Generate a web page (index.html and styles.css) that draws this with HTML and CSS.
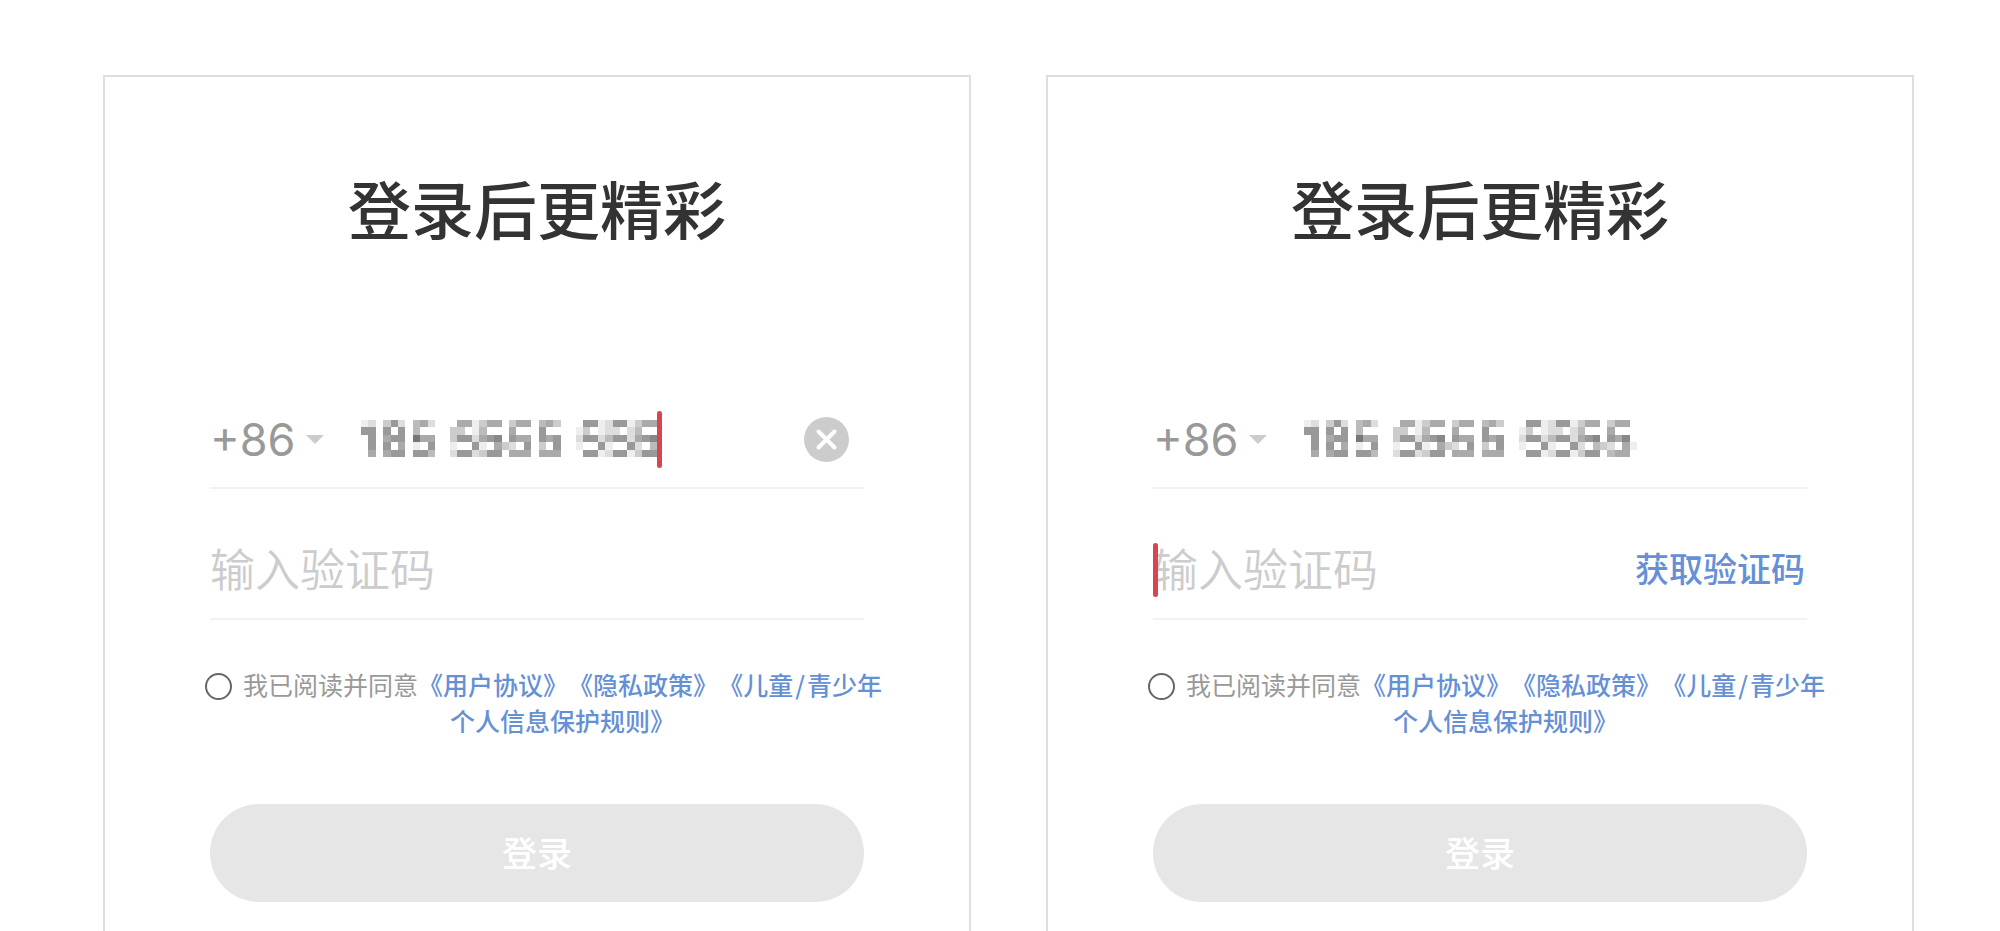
FILE: index.html
```html
<!DOCTYPE html>
<html lang="zh-CN">
<head>
  <meta charset="UTF-8" />
  <meta name="viewport" content="width=device-width, initial-scale=1.0"/>
  <title>登录</title>

  <link rel="stylesheet" href="styles.css">
</head>
<body>
  <main class="screens">

    <!-- Typing the phone number -->
    <section class="login-card">
      <h1>登录后更精彩</h1>
      <form>
        <div class="field field-phone">
          <div class="country">
            <select aria-label="国家/地区代码">
              <option>+86</option>
            </select>
            <svg class="arrow" width="18" height="9" viewBox="0 0 18 9"><path d="M0 0h18L9 9z"/></svg>
          </div>
          <div class="phone">
            <input type="tel" aria-label="手机号" value="185 5555 555">
            <svg class="mask" data-cols="40"></svg>
            <span class="caret caret-end"></span>
          </div>
          <button type="button" class="clear" aria-label="清除">
            <svg width="45" height="45" viewBox="0 0 45 45">
              <circle cx="22.5" cy="22.5" r="22.5"/>
              <path d="M14.5 14.5l16 16M30.5 14.5l-16 16"/>
            </svg>
          </button>
        </div>

        <div class="field field-code">
          <input type="text" aria-label="验证码" placeholder="输入验证码">
        </div>

        <div class="terms">
          <input type="checkbox" id="agree1">
          <p><label for="agree1">我已阅读并同意</label><a href="#">《用户协议》</a><a href="#">《隐私政策》</a><a href="#">《儿童<span class="slash">/</span>青少年个人信息保护规则》</a></p>
        </div>

        <button type="button" class="submit">登录</button>
      </form>
    </section>

    <!-- Number complete, waiting for the code -->
    <section class="login-card">
      <h1>登录后更精彩</h1>
      <form>
        <div class="field field-phone">
          <div class="country">
            <select aria-label="国家/地区代码">
              <option>+86</option>
            </select>
            <svg class="arrow" width="18" height="9" viewBox="0 0 18 9"><path d="M0 0h18L9 9z"/></svg>
          </div>
          <div class="phone">
            <input type="tel" aria-label="手机号" value="185 5555 5555">
            <svg class="mask" data-cols="45"></svg>
          </div>
        </div>

        <div class="field field-code">
          <span class="caret caret-start"></span>
          <input type="text" aria-label="验证码" placeholder="输入验证码">
          <button type="button" class="get-code">获取验证码</button>
        </div>

        <div class="terms">
          <input type="checkbox" id="agree2">
          <p><label for="agree2">我已阅读并同意</label><a href="#">《用户协议》</a><a href="#">《隐私政策》</a><a href="#">《儿童<span class="slash">/</span>青少年个人信息保护规则》</a></p>
        </div>

        <button type="button" class="submit">登录</button>
      </form>
    </section>

  </main>

  <script src="script.js"></script>
</body>
</html>
```
FILE: styles.css
```css
* {
  box-sizing: border-box;
  margin: 0;
  padding: 0;
}

body {
  font-family: 'Noto Sans CJK SC', sans-serif;
  background-color: #fff;
}

input, select, button {
  font-family: inherit;
  border: none;
  outline: none;
  background: none;
}

button {
  cursor: pointer;
}

.screens {
  display: flex;
  gap: 75px;
  min-height: 100vh;
  padding: 75px 86px 0 103px;
}

.login-card {
  flex: 1;
  min-width: 0;
  padding: 84px 105px 0;
  border: 2px solid #dedede;
  border-bottom: none;
}

.login-card h1 {
  margin-bottom: 136px;
  font-size: 63px;
  font-weight: 500;
  line-height: 92px;
  color: #333;
  text-align: center;
}

/* Form rows */
.field {
  position: relative;
  display: flex;
  align-items: center;
  height: 100px;
  border-bottom: 2px solid #f2f2f2;
}

.field-phone {
  padding-top: 2px;
}

.field-code {
  margin-top: 31px;
  padding-bottom: 4px;
}

.field input {
  flex: 1;
  min-width: 0;
  height: 64px;
  font-size: 45px;
  font-weight: 350;
  color: #333;
}

.field input::placeholder {
  color: #ccc;
}

.country {
  display: flex;
  align-items: center;
  gap: 10px;
  flex: 0 0 151px;
}

.country select {
  appearance: none;
  font-family: Inter, sans-serif;
  font-size: 45px;
  color: #999;
}

.arrow {
  fill: #ccc;
}

.phone {
  position: relative;
  display: flex;
  flex: 1;
  min-width: 0;
}

.field .phone input {
  font-family: Inter, sans-serif;
  font-size: 40px;
}

/* Mosaic over the phone number */
.mask {
  position: absolute;
  left: 0;
  top: 13px;
  height: 37px;
  background: #fff;
}

.mask[data-cols="40"] {
  width: 296px;
}

.mask[data-cols="45"] {
  width: 333px;
}

.caret {
  position: absolute;
  width: 5px;
  border-radius: 3px;
  background: #d94452;
}

.caret-end {
  left: 296px;
  top: 4px;
  height: 57px;
}

.caret-start {
  left: 0;
  top: 23px;
  height: 54px;
}

.clear {
  display: flex;
  margin-right: 15px;
}

.clear circle {
  fill: #ccc;
}

.clear path {
  stroke: #fff;
  stroke-width: 4;
  stroke-linecap: round;
}

.get-code {
  margin-right: 2px;
  font-size: 34px;
  font-weight: 500;
  color: #6590d6;
}

/* Agreement */
.terms {
  display: flex;
  align-items: flex-start;
  gap: 10px;
  margin: 46px -19px 66px -5px;
}

.terms input {
  appearance: none;
  flex: none;
  width: 27px;
  height: 27px;
  margin-top: 7px;
  border: 2px solid #666;
  border-radius: 50%;
}

.terms input:checked {
  background: #5b87d3;
}

.terms p {
  flex: 1;
  font-size: 25px;
  line-height: 36px;
  color: #999;
  text-align: center;
  text-spacing-trim: space-all;
}

.terms a {
  font-weight: 500;
  color: #6590d6;
  text-decoration: none;
}

.slash {
  margin: 0 2px;
}

.submit {
  display: block;
  width: 100%;
  height: 98px;
  padding-bottom: 4px;
  border-radius: 49px;
  background: #e6e6e6;
  font-size: 35px;
  font-weight: 500;
  color: #fff;
}

/* Responsive */
@media (max-width: 1600px) {
  .screens {
    flex-direction: column;
    padding: 40px;
  }
}
```
FILE: script.js
```js
// one character per mosaic cell: a grey level in hex, "." is empty
const mosaic = [
  'ed.c9d.bad..faaecaa.caa.bac..f99ed99ecaa.caa.',
  '99.9.9.b....cc.eb...a...9....ec.edd.db...a...',
  '.9.a99.7aa..c99da98.9aa.9a9..d99db99da98.9a8.',
  '.9f9.a.e.9..e..9e.acd.9fc.9..e..9e..9d.bcd.ae',
  '.a.a99.99b..d99dc99.aaa.aaa..f99ed99ec99.baa.'
];

document.querySelectorAll('.mask').forEach(svg => {
  const cols = Number(svg.dataset.cols);
  svg.setAttribute('viewBox', `0 0 ${cols} 5`);
  svg.setAttribute('shape-rendering', 'crispEdges');

  mosaic.forEach((row, y) => {
    [...row.slice(0, cols)].forEach((level, x) => {
      if (level === '.') return;
      const cell = document.createElementNS('http://www.w3.org/2000/svg', 'rect');
      cell.setAttribute('x', x);
      cell.setAttribute('y', y);
      cell.setAttribute('width', 1);
      cell.setAttribute('height', 1);
      cell.setAttribute('fill', '#' + level.repeat(3));
      svg.appendChild(cell);
    });
  });
});
```
